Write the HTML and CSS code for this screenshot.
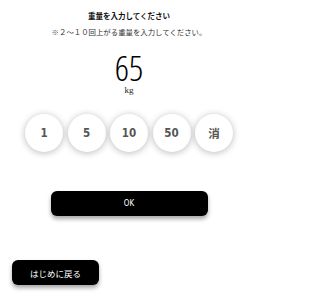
FILE: index.html
```html
<!DOCTYPE html>
<html lang="ja">
<head>
<meta charset="utf-8">
<link rel="stylesheet" href="styles.css">
</head>
<body>
<div class="page">
  <div class="title">重量を入力してください</div>
  <div class="note"><span class="mark">※</span>２～１０回上がる重量を入力してください。</div>
  <div class="value">65</div>
  <div class="unit">kg</div>
  <div class="keys">
    <div class="key">1</div>
    <div class="key">5</div>
    <div class="key">10</div>
    <div class="key">50</div>
    <div class="key">消</div>
  </div>
  <div class="ok-row"><div class="ok">OK</div></div>
  <div class="back-row"><div class="back">はじめに戻る</div></div>
</div>
</body>
</html>
```
FILE: styles.css
```css
html, body { margin: 0; padding: 0; background: #fff; }
body {
  width: 258px; height: 300px; overflow: hidden;
  font-family: "Noto Sans CJK JP", "Noto Sans", sans-serif;
  color: #111;
}
.page { display: flex; flex-direction: column; align-items: center; }
.title {
  margin-top: 10px; font-size: 7.5px; line-height: 11px; font-weight: 700;
}
.note {
  margin-top: 5px; font-size: 7.4px; line-height: 11px; color: #333;
}
.mark {
  font-family: "Noto Sans CJK JP", sans-serif; color: #444;
  filter: grayscale(1);
}
.value {
  margin-top: 14px;
  font-family: "Open Sans", sans-serif;
  font-stretch: 75%; font-weight: 300;
  font-size: 35px; line-height: 34px; color: #000;
}
.unit {
  margin-top: 1px;
  font-family: "Liberation Serif", serif; font-size: 9px; line-height: 9px; color: #222;
}
.keys {
  margin-top: 19px; display: flex; gap: 4.5px;
}
.key {
  width: 38px; height: 38px; border-radius: 50%; background: #fff;
  box-shadow: 0 1px 7px rgba(0,0,0,0.28);
  display: flex; align-items: center; justify-content: center;
  font-family: "DejaVu Sans Condensed", "Noto Sans CJK JP", sans-serif;
  font-stretch: condensed;
  font-weight: 700; font-size: 11.5px; color: #555;
}
.ok-row { margin-top: 39px; width: 100%; display: flex; justify-content: center; }
.ok {
  width: 157px; height: 25px; border-radius: 6px; background: #000;
  box-shadow: 0 3px 4px rgba(0,0,0,0.35);
  display: flex; align-items: center; justify-content: center;
  color: #fff; font-family: "DejaVu Sans Condensed", sans-serif; font-size: 8px;
}
.back-row { margin-top: 44px; width: 100%; display: flex; padding-left: 12px; box-sizing: border-box; }
.back {
  width: 87px; height: 25px; border-radius: 6px; background: #000;
  box-shadow: 0 3px 4px rgba(0,0,0,0.35);
  display: flex; align-items: center; justify-content: center;
  color: #fff; font-size: 8.5px;
}
```
